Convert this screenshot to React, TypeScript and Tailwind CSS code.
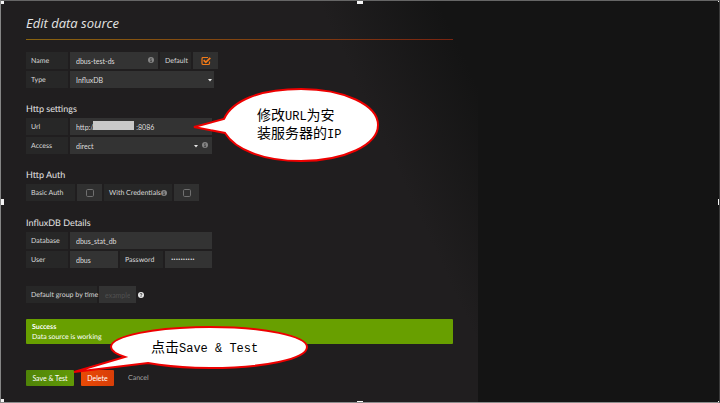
import type { InputHTMLAttributes, ReactNode } from "react";

function Label({ htmlFor, width, children }: { htmlFor: string; width: string; children: ReactNode }) {
  return (
    <label htmlFor={htmlFor} className={`flex h-[17px] shrink-0 items-center justify-between bg-[#272727] px-[5px] whitespace-nowrap ${width}`}>
      {children}
    </label>
  );
}

function Field({ width, className = "", ...rest }: { width: string } & InputHTMLAttributes<HTMLInputElement>) {
  return <input {...rest} className={`h-[17px] shrink-0 bg-[#333333] px-1.5 text-[#dedede] outline-none placeholder:text-[#505050] ${width} ${className}`} />;
}

function Info({ className = "" }: { className?: string }) {
  return (
    <svg viewBox="0 0 12 12" className={`size-[6px] shrink-0 ${className}`} aria-hidden="true">
      <circle cx="6" cy="6" r="6" fill="#858585" />
      <path d="M6 2v2M4.5 5.2H6.3V9M4.3 9.2h3.6" stroke="#303030" strokeWidth="1.5" fill="none" />
    </svg>
  );
}

function Caret({ className = "" }: { className?: string }) {
  return (
    <svg viewBox="0 0 4 3" className={`pointer-events-none h-[3px] w-1 ${className}`} aria-hidden="true">
      <path d="M0 0h4L2 2.6z" fill="#e8e8e8" />
    </svg>
  );
}

function Check({ id, checked = false }: { id: string; checked?: boolean }) {
  return (
    <span className="relative flex h-[17px] w-[25px] shrink-0 items-center justify-center bg-[#303030]">
      <input id={id} type="checkbox" defaultChecked={checked} className="peer absolute inset-0 size-full cursor-pointer appearance-none" />
      <svg viewBox="0 0 10 10" className="pointer-events-none size-[10px] text-[#707070] peer-checked:hidden" fill="none" stroke="currentColor" aria-hidden="true">
        <rect x="1.5" y="1.5" width="7" height="7" rx="1.2" />
      </svg>
      <svg viewBox="0 0 10 10" className="pointer-events-none hidden size-[10px] text-[#f27a18] peer-checked:block" fill="none" stroke="currentColor" aria-hidden="true">
        <path d="M8.5 5.5v1.7q0 1.3-1.3 1.3H2.3Q1 8.5 1 7.2V2.8Q1 1.500 2.300 1.500H7" strokeWidth="1.200" />
        <path d="M2.700 4.200L4.800 6.300 9.300 1.800" strokeWidth="1.800" />
      </svg>
    </span>
  );
}

function Handle({ className }: { className: string }) {
  return <span className={`absolute bg-[#f4f4f4] ${className}`} />;
}

const row = "flex gap-x-[2px]";
const heading = "text-[9px] leading-3 text-[#e4e4e4]";
const callout = "font-['Liberation_Mono','Noto_Sans_CJK_SC',monospace] text-[14px] leading-[18px] text-black";

export default function App() {
  return (
    <div className="relative flex min-h-screen overflow-hidden border border-t-[#666666] border-r-[#3a3a3a] border-b-[#8c8c8c] border-l-[#858585] bg-[#141414] font-['Lato','Open_Sans',sans-serif] text-[7px] leading-[10px] text-[#d8d8d8]">
      <main className="w-[66.4%] bg-linear-[65deg,#201e1f_0%,#201e1f_76%,#141414_94%] pt-[13px] pr-[25px] pl-[25px]">
        <h1 className="font-['Open_Sans','Noto_Sans',sans-serif] text-[13px] leading-[18px] text-[#e4e4e4] italic">Edit data source</h1>
        <div className="mt-[7px] h-px bg-[linear-gradient(to_right,#8a6410,#7a2410)]" />

        <form className="[text-rendering:geometricPrecision]" onSubmit={(e) => e.preventDefault()}>
          <div className="mt-3 flex flex-col gap-[2px]">
            <div className={row}>
              <Label htmlFor="name" width="w-[42px]">Name</Label>
              <span className="relative flex">
                <Field id="name" width="w-[88px]" defaultValue="dbus-test-ds" />
                <Info className="absolute top-[5px] right-1" />
              </span>
              <Label htmlFor="default" width="w-[31px]">Default</Label>
              <Check id="default" checked />
            </div>
            <div className={row}>
              <Label htmlFor="type" width="w-[42px]">Type</Label>
              <span className="relative flex">
                <select id="type" className="h-[17px] w-[144px] appearance-none bg-[#333333] px-1.5 text-[#dedede]">
                  <option>InfluxDB</option>
                </select>
                <Caret className="absolute top-2 right-[2px]" />
              </span>
            </div>
          </div>

          <h2 className={`mt-[15px] ${heading}`}>Http settings</h2>
          <div className="mt-[3px] flex flex-col gap-[2px]">
            <div className={row}>
              <Label htmlFor="url" width="w-[42px]">Url</Label>
              <span className="relative flex">
                <Field id="url" width="w-[142px]" defaultValue="http://                       :8086" />
                <span className="absolute top-[3px] left-[23px] h-[9px] w-[41px] bg-[#c8c8c8]" />
              </span>
            </div>
            <div className={row}>
              <Label htmlFor="access" width="w-[42px]">Access</Label>
              <span className="relative flex">
                <select id="access" className="h-[17px] w-[142px] appearance-none bg-[#333333] px-1.5 text-[#dedede]">
                  <option>direct</option>
                </select>
                <Caret className="absolute top-2 right-[14px]" />
                <Info className="absolute top-[5px] right-1" />
              </span>
            </div>
          </div>

          <h2 className={`mt-[15px] ${heading}`}>Http Auth</h2>
          <div className={`mt-[3px] ${row}`}>
            <Label htmlFor="basic" width="w-[49px]">Basic Auth</Label>
            <Check id="basic" />
            <Label htmlFor="credentials" width="w-[68px]">With Credentials <Info /></Label>
            <Check id="credentials" />
          </div>

          <h2 className={`mt-4 ${heading}`}>InfluxDB Details</h2>
          <div className="mt-[3px] flex flex-col gap-[2px]">
            <div className={row}>
              <Label htmlFor="database" width="w-[42px]">Database</Label>
              <Field id="database" width="w-[142px]" defaultValue="dbus_stat_db" />
            </div>
            <div className={row}>
              <Label htmlFor="user" width="w-[42px]">User</Label>
              <Field id="user" width="w-[48px]" defaultValue="dbus" />
              <Label htmlFor="password" width="w-[43px]">Password</Label>
              <Field id="password" type="password" width="w-[47px]" className="font-['Roboto',sans-serif]" defaultValue="secretpass" />
            </div>
          </div>

          <div className={`mt-[18px] ${row} items-center`}>
            <Label htmlFor="group" width="w-[71px]">Default group by time</Label>
            <Field id="group" width="w-[37px]" placeholder="example" />
            <svg viewBox="0 0 12 12" className="size-[6px]" aria-hidden="true">
              <circle cx="6" cy="6" r="6" fill="#e8e8e8" />
              <path d="M4 4.500Q4 3 6 3T8 4.500Q8 5.500 6 6.300V7.300M6 8.300V10" stroke="#222222" strokeWidth="1.500" fill="none" />
            </svg>
          </div>

          <div role="status" className="mt-4 h-[25px] rounded-[1px] bg-[#689f00] px-1.5 pt-[3px] text-white">
            <strong className="block">Success</strong>
            <p>Data source is working</p>
          </div>

          <div className="mt-[26px] flex gap-[7px]">
            <button type="submit" className="h-4 w-12 rounded-[1px] bg-linear-to-r from-[#4f8408] to-[#629a06] whitespace-nowrap text-white">Save &amp; Test</button>
            <button type="button" className="h-4 w-[33px] rounded-[1px] bg-linear-to-r from-[#e94a05] to-[#d83e08] text-white">Delete</button>
            <a href="#cancel" className="px-[7px] py-[3px] text-[#a3a3a3]">Cancel</a>
          </div>
        </form>
      </main>

      <aside className={`absolute top-[86px] left-[189px] h-[78px] w-[190px] ${callout}`}>
        <svg viewBox="0 0 190 78" className="absolute inset-0 size-full" aria-hidden="true">
          <path d="M34 32C42 14 69 2 111 2C154 2 188 18 188 38C188 58 154 74 111 74C72 74 45 62 35 46L4 40Z" fill="#ffffff" stroke="#ee0000" strokeWidth="2" />
        </svg>
        <p className="relative pt-5 pl-[67px] whitespace-nowrap">
          修改<span className="text-[12px] leading-none">URL</span>为安<br />
          装服务器的<span className="text-[12px] leading-none">IP</span>
        </p>
      </aside>

      <aside className={`absolute top-[324px] left-[68px] h-[52px] w-[242px] ${callout}`}>
        <svg viewBox="0 0 242 52" className="absolute inset-0 size-full" aria-hidden="true">
          <path d="M56 32C47 29 42 26 42 22C42 11 86 2 141 2C195 2 238 11 238 22C238 34 195 43 141 43C117 43 96 41 79 38L5 47Z" fill="#ffffff" stroke="#ee0000" strokeWidth="2" />
        </svg>
        <p className="relative pt-[14px] pl-[82px] whitespace-nowrap">
          点击<span className="text-[12px] leading-none">Save &amp; Test</span>
        </p>
      </aside>

      <Handle className="-top-px -left-px size-1" />
      <Handle className="-top-px left-1/2 h-1 w-1.5 -translate-x-1/2" />
      <Handle className="-top-px -right-px size-[2px]" />
      <Handle className="top-1/2 -left-px h-1.5 w-1 -translate-y-1/2" />
      <Handle className="top-1/2 -right-px h-1.5 w-[2px] -translate-y-1/2" />
      <Handle className="-bottom-px -left-px size-1" />
      <Handle className="-bottom-px left-1/2 h-[2px] w-1.5 -translate-x-1/2" />
      <Handle className="-right-px -bottom-px size-[2px]" />
    </div>
  );
}
